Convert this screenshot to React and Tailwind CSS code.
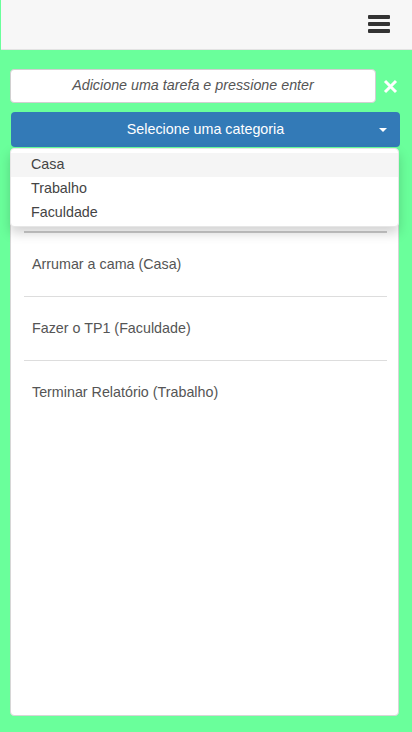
import React from "react";

export default function App() {
  const items = ["Arrumar a cama (Casa)", "Fazer o TP1 (Faculdade)", "Terminar Relatório (Trabalho)"];
  return (
    <div
      className="relative w-[412px] h-[732px] overflow-hidden bg-[#6aff9b] flex flex-col"
      style={{ fontFamily: '"Liberation Sans", Arial, sans-serif' }}
    >
      <header className="ml-[1px] h-[50px] shrink-0 bg-[#f7f7f7] border-b border-[#e3e3e3] flex items-center justify-end pr-[22px]">
        <div className="flex flex-col gap-[3px] w-[22px] mt-[-1px]">
          <span className="block h-[4px] rounded-[1px] bg-[#333]" />
          <span className="block h-[4px] rounded-[1px] bg-[#333]" />
          <span className="block h-[4px] rounded-[1px] bg-[#333]" />
        </div>
      </header>

      <main className="relative flex-1 flex flex-col px-[10px] pt-[19px] pb-[16px]">
        <div className="flex items-center">
          <div className="w-[366px] h-[34px] bg-white border border-[#d0d0d0] rounded-[4px] flex items-center justify-center">
            <span className="italic text-[14.3px] text-[#555]">Adicione uma tarefa e pressione enter</span>
          </div>
          <svg className="ml-[7px]" width="15" height="15" viewBox="0 0 15 15">
            <path d="M2 2 L13 13 M13 2 L2 13" stroke="#fff" strokeWidth="3" strokeLinecap="butt" />
          </svg>
        </div>

        <div className="relative mt-[9px] ml-[1px] w-[389px]">
          <div className="h-[35px] bg-[#337ab7] rounded-[4px] flex items-center justify-center relative">
            <span className="text-[14.3px] text-white">Selecione uma categoria</span>
            <span className="absolute right-[13px] top-[16px] w-0 h-0 border-l-[4px] border-r-[4px] border-t-[4px] border-l-transparent border-r-transparent border-t-white" />
          </div>
        </div>

        <div className="mt-[10px] w-[389px] flex-1 bg-white border border-[#d6d6d6] rounded-[4px] pl-[13px] pr-[11px] pt-[73px]">
          <div className="h-[2px] bg-[#cccccc]" />
          {items.map((t, i) => (
            <div
              key={t}
              className={`h-[64px] flex items-center pl-[8px] text-[14.3px] text-[#555] ${i < items.length - 1 ? "border-b border-[#dddddd]" : ""}`}
            >
              {t}
            </div>
          ))}
        </div>

        <div className="absolute left-[10px] top-[98px] w-[389px] h-[79px] bg-white rounded-[4px] shadow-[0_6px_12px_rgba(0,0,0,0.175)] border border-[#e6e6e6] pt-[4px]">
          <div className="h-[24px] bg-[#f5f5f5] flex items-center pl-[20px] text-[14.3px] text-[#444]">Casa</div>
          <div className="h-[24px] flex items-center pl-[20px] text-[14.3px] text-[#444]">Trabalho</div>
          <div className="h-[24px] flex items-center pl-[20px] text-[14.3px] text-[#444]">Faculdade</div>
        </div>
      </main>
    </div>
  );
}
